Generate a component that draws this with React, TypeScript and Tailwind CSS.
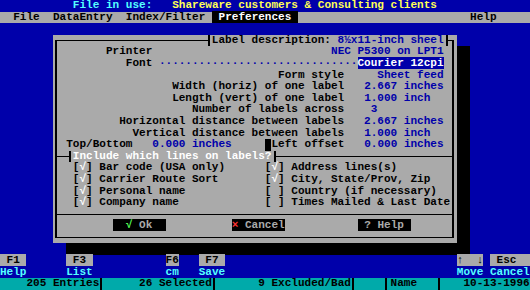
import React from "react";

const sp = (n: number) => " ".repeat(n);

function Row({ children, className = "" }: { children?: React.ReactNode; className?: string }) {
  return <div className={`h-[11.6px] shrink-0 whitespace-pre ${className}`}>{children}</div>;
}

const B = ({ children }: { children: React.ReactNode }) => <span className="text-[#0000aa]">{children}</span>;

function Bar() {
  return (
    <span className="inline-flex h-[11.6px] w-[1ch] justify-start pl-[1px] align-top">
      <span className="w-[2px] bg-black" />
    </span>
  );
}

function Check({ on, label }: { on: boolean; label: string }) {
  return (
    <span>
      [<span className="text-white">{on ? "√" : " "}</span>] {label}
    </span>
  );
}

export default function App() {
  return (
    <div className="flex h-[290px] w-[530px] flex-col overflow-hidden bg-[#0000aa] font-['Liberation_Mono','DejaVu_Sans_Mono',monospace] text-[11.04px] leading-[11.6px] font-bold">
      {/* Row 0 */}
      <Row>
        {sp(11)}
        <span className="text-[#55ffff]">File in use:</span>
        {sp(3)}
        <span className="text-[#ffff55]">Shareware customers &amp; Consulting clients</span>
      </Row>
      {/* Row 1 menu */}
      <Row className="bg-[#aaaaaa] text-black">
        {sp(2)}File{sp(2)}DataEntry{sp(2)}Index/Filter{sp(1)}
        <span className="bg-black text-white"> Preferences </span>
        {sp(26)}Help
      </Row>
      <Row />

      {/* Dialog rows 3-20 */}
      <div className="flex shrink-0">
        <div className="w-[8ch] shrink-0" />
        <div className="relative w-[61ch] shrink-0 bg-[#aaaaaa] text-black">
          <div className="absolute top-[5.3px] right-[calc(0.5ch-1px)] bottom-[5.3px] left-[calc(0.5ch-1px)] border-x-2 border-y border-black" />
          <div className="relative flex flex-col">
            <Row className="flex">
              <div className="w-[calc(23.5ch-1px)] shrink-0" />
              <div className="w-[calc(36ch+2px)] shrink-0 border-x-2 border-black bg-[#aaaaaa] pl-[calc(0.5ch-1px)]">
                Label description: <B>8½x11-inch sheel</B>
              </div>
            </Row>
            <Row>
              {sp(8)}Printer{sp(27)}
              <B>NEC P5300 on LPT1</B>
            </Row>
            <Row>
              {sp(11)}Font{sp(1)}
              <B>{"·".repeat(30)}</B>
              <span className="bg-[#0000aa] text-white">Courier 12cpi</span>
            </Row>
            <Row>
              {sp(34)}Form style{sp(5)}
              <B>Sheet feed</B>
            </Row>
            <Row>
              {sp(18)}Width (horiz) of one label{sp(3)}
              <B>2.667 inches</B>
            </Row>
            <Row>
              {sp(18)}Length (vert) of one label{sp(3)}
              <B>1.000 inch</B>
            </Row>
            <Row>
              {sp(21)}Number of labels across{sp(4)}
              <B>3</B>
            </Row>
            <Row>
              {sp(10)}Horizontal distance between labels{sp(3)}
              <B>2.667 inches</B>
            </Row>
            <Row>
              {sp(12)}Vertical distance between labels{sp(3)}
              <B>1.000 inch</B>
            </Row>
            <Row>
              {sp(2)}Top/Bottom{sp(3)}
              <B>0.000 inches</B>
              {sp(5)}
              <span className="inline-block h-[11.6px] w-[1ch] bg-black align-top" />
              Left offset{sp(3)}
              <B>0.000 inches</B>
            </Row>
            {/* group separator */}
            <Row className="flex">
              <div className="flex w-[calc(2.5ch-1px)] shrink-0 items-center pl-[0.5ch]">
                <div className="h-px w-full bg-black" />
              </div>
              <div className="w-[2px] shrink-0 bg-black" />
              <div className="w-[calc(0.5ch-1px)] shrink-0" />
              <span className="w-[30ch] shrink-0 text-white">Include which lines on labels?</span>
              <div className="w-[calc(0.5ch-1px)] shrink-0" />
              <div className="w-[2px] shrink-0 bg-black" />
              <div className="flex flex-1 items-center pr-[0.5ch]">
                <div className="h-px w-full bg-black" />
              </div>
            </Row>
            {[
              [true, "Bar code (USA only)", true, "Address lines(s)"],
              [true, "Carrier Route Sort", true, "City, State/Prov, Zip"],
              [true, "Personal name", false, "Country (if necessary)"],
              [true, "Company name", false, "Times Mailed & Last Date"],
            ].map(([a, la, b, lb], i) => (
              <Row key={i} className="flex">
                <div className="w-[3ch] shrink-0" />
                <div className="w-[29ch] shrink-0">
                  <Check on={a as boolean} label={la as string} />
                </div>
                <div>
                  <Check on={b as boolean} label={lb as string} />
                </div>
              </Row>
            ))}
            <Row className="flex items-center px-[0.5ch]">
              <div className="h-px w-full bg-black" />
            </Row>
            <Row>
              {sp(9)}
              <span className="bg-black text-[#aaaaaa]">
                {sp(2)}
                <span className="text-[#55ff55]">√</span> Ok{sp(2)}
              </span>
              {sp(10)}
              <span className="bg-black text-[#aaaaaa]">
                <span className="text-[#ff3333]">×</span> Cancel
              </span>
              {sp(11)}
              <span className="bg-black text-[#aaaaaa]"> ? Help </span>
            </Row>
            <Row />
          </div>
        </div>
        <div className="mt-[11.6px] w-[2ch] shrink-0 bg-black" />
      </div>
      <Row className="flex">
        <div className="w-[10ch] shrink-0" />
        <div className="w-[61ch] shrink-0 bg-black" />
      </Row>

      {/* Row 22 function keys */}
      <Row className="text-black">
        <span className="bg-[#aaaaaa]"> F1 </span>
        {sp(6)}
        <span className="bg-[#aaaaaa]"> F3 </span>
        {sp(11)}
        <span className="bg-[#aaaaaa]">F6</span>
        {sp(3)}
        <span className="bg-[#aaaaaa]"> F7 </span>
        {sp(35)}
        <span className="bg-[#aaaaaa]">↑  ↓</span>
        {sp(1)}
        <span className="bg-[#aaaaaa]"> Esc  </span>
      </Row>
      <Row className="text-[#55ffff]">
        Help{sp(6)}List{sp(11)}cm{sp(3)}Save{sp(35)}Move Cancel
      </Row>
      <Row className="bg-[#00aaaa] text-black">
        {sp(4)}205 Entries
        <Bar />
        {sp(5)}26 Selected
        <Bar />
        {sp(6)}9 Excluded/Bad
        <Bar />
        {sp(4)}
        <Bar />
        Name{sp(3)}
        <Bar />
        {sp(3)}10-13-1996
      </Row>
    </div>
  );
}
